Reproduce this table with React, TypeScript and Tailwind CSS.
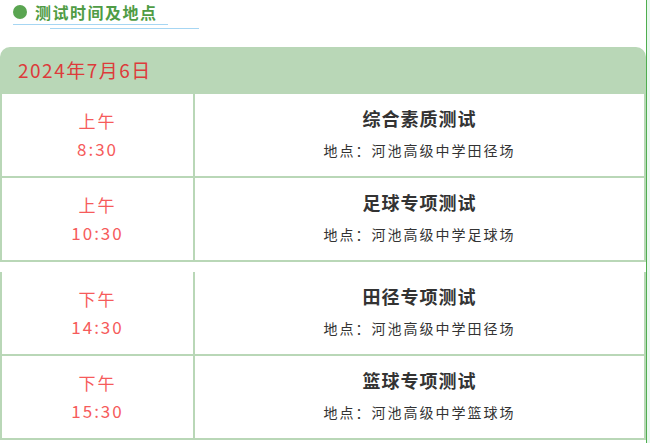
import React from 'react';

type Session = {
  period: string;
  time: string;
  title: string;
  place: string;
};

const morning: Session[] = [
  { period: '上午', time: '8:30', title: '综合素质测试', place: '地点：河池高级中学田径场' },
  { period: '上午', time: '10:30', title: '足球专项测试', place: '地点：河池高级中学足球场' },
];

const afternoon: Session[] = [
  { period: '下午', time: '14:30', title: '田径专项测试', place: '地点：河池高级中学田径场' },
  { period: '下午', time: '15:30', title: '篮球专项测试', place: '地点：河池高级中学篮球场' },
];

const font = { fontFamily: '"Noto Sans CJK SC", "Noto Sans", sans-serif' };

function Row({ s }: { s: Session }) {
  return (
    <div className="flex h-[84px] border-b-2 border-[#b9d7b7]">
      <div className="w-[193px] shrink-0 border-r-2 border-[#b9d7b7] flex flex-col items-center justify-center text-[17px] leading-[28px] tracking-[2px] text-[#f65b5b]">
        <span>{s.period}</span>
        <span>{s.time}</span>
      </div>
      <div className="flex-1 flex flex-col items-center justify-center pb-[5px] text-[#333]">
        <span className="text-[18px] leading-[28px] font-bold tracking-[1px]">{s.title}</span>
        <span className="mt-[6px] text-[14px] leading-[24px] tracking-[2px]">{s.place}</span>
      </div>
    </div>
  );
}

export default function App() {
  return (
    <div className="flex w-[650px] h-[443px] bg-[#e9f8ef] overflow-hidden" style={font}>
      <div className="w-[647px] shrink-0 h-full bg-white border-r border-[#4fae4f]">
        {/* Section heading */}
        <div className="flex items-center h-[24px] pl-[13px] gap-[8px]">
          <span className="w-[14px] h-[14px] rounded-full bg-[#5aa551]" />
          <span className="text-[16px] font-bold tracking-[1.5px] text-[#4f9c45]">测试时间及地点</span>
        </div>
        <div className="ml-[13px] w-[155px] h-px bg-[#a6d6f3]" />
        <div className="ml-[50px] mt-[3px] w-[149px] h-px bg-[#a6d6f3]" />

        {/* Schedule card */}
        <div className="mt-[18px] w-[646px]">
          <div className="h-[47px] rounded-t-[10px] bg-[#b9d7b7] flex items-center pl-[18px] text-[19px] tracking-[1.5px] text-[#dd3b3b]">
            2024年7月6日
          </div>
          <div className="border-x-2 border-[#b9d7b7]">
            {morning.map((s) => (
              <Row key={s.title} s={s} />
            ))}
          </div>
          <div className="mt-[10px] border-x-2 border-[#b9d7b7]">
            {afternoon.map((s) => (
              <Row key={s.title} s={s} />
            ))}
          </div>
        </div>
      </div>
    </div>
  );
}
